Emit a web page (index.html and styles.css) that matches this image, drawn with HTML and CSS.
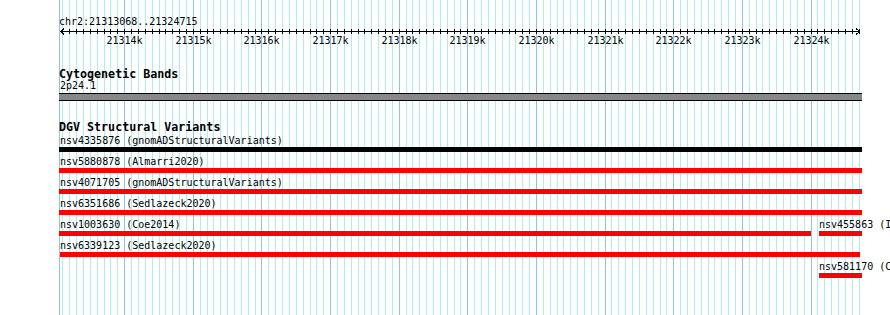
FILE: index.html
```html
<!DOCTYPE html>
<html lang="en">
<head>
    <meta charset="UTF-8">
    <meta name="viewport" content="width=device-width, initial-scale=1.0">
    <title>chr2:21313068..21324715</title>
    <link rel="stylesheet" href="styles.css">
</head>
<body>

<div class="browser">
    <div class="gridlines" id="gridlines"></div>

    <div class="location">chr2:21313068..21324715</div>
    <svg class="ruler" id="ruler" width="890" height="20"></svg>

    <div class="track">
        <div class="track-label">Cytogenetic Bands</div>
        <div class="band-name">2p24.1</div>
        <div class="band"></div>
    </div>

    <div class="track track-dgv">
        <div class="track-label">DGV Structural Variants</div>
        <div id="variants"></div>
    </div>
</div>

<script>
    const viewStart = 21313068;
    const viewEnd = 21324715;
    const trackLeft = 59;
    const trackRight = 862;

    // px position of a base on screen
    function bpToPx(bp) {
        return 124.7 + (bp - 21314000) * 0.06863;
    }

    function drawGrid() {
        const grid = document.getElementById('gridlines');

        const edge = document.createElement('div');
        edge.className = 'gridline gridline-major';
        edge.style.left = trackLeft + 'px';
        grid.appendChild(edge);

        for (let bp = Math.ceil(viewStart / 100) * 100; bp <= viewEnd; bp += 100) {
            const line = document.createElement('div');
            line.className = bp % 1000 === 0 ? 'gridline gridline-major' : 'gridline gridline-minor';
            line.style.left = Math.floor(bpToPx(bp)) + 'px';
            grid.appendChild(line);
        }
    }

    function drawRuler() {
        const ruler = document.getElementById('ruler');
        let svg = '<line class="ruler-line" x1="60" y1="3.5" x2="860" y2="3.5"/>';
        svg += '<path class="ruler-line" d="M64,0.5 L60.5,3.5 L64,6.5"/>';
        svg += '<path class="ruler-line" d="M856,0.5 L859.5,3.5 L856,6.5"/>';

        for (let bp = Math.ceil(viewStart / 100) * 100; bp <= viewEnd; bp += 100) {
            const x = Math.floor(bpToPx(bp)) + 0.5;
            svg += `<line class="ruler-line" x1="${x}" y1="1" x2="${x}" y2="6"/>`;
            if (bp % 1000 === 0) {
                svg += `<text class="tick-label" x="${x}" y="16">${bp / 1000}k</text>`;
            }
        }
        ruler.innerHTML = svg;
    }

    const variants = [
        [{ name: 'nsv4335876', source: 'gnomADStructuralVariants', start: 21290112, end: 21338410, color: '#000' }],
        [{ name: 'nsv5880878', source: 'Almarri2020', start: 21300541, end: 21331220, color: '#f00' }],
        [{ name: 'nsv4071705', source: 'gnomADStructuralVariants', start: 21296830, end: 21329975, color: '#f00' }],
        [{ name: 'nsv6351686', source: 'Sedlazeck2020', start: 21305114, end: 21327601, color: '#f00' }],
        [
            { name: 'nsv1003630', source: 'Coe2014', start: 21260731, end: 21324000, color: '#f00' },
            { name: 'nsv455863', source: 'Itsara2009', start: 21324120, end: 21365472, color: '#f00' }
        ],
        [{ name: 'nsv6339123', source: 'Sedlazeck2020', start: 21313058, end: 21324725, color: '#f00' }],
        [{ name: 'nsv581170', source: 'Cooper2011', start: 21324120, end: 21412830, color: '#f00' }]
    ];

    function drawVariants() {
        const container = document.getElementById('variants');

        variants.forEach(row => {
            const rowDiv = document.createElement('div');
            rowDiv.className = 'feature-row';

            row.forEach(variant => {
                const left = Math.max(Math.floor(bpToPx(variant.start)), trackLeft);
                const right = Math.min(Math.floor(bpToPx(variant.end)), trackRight);

                const feature = document.createElement('div');
                feature.className = 'feature';
                feature.style.left = left + 'px';

                const label = document.createElement('div');
                label.className = left === trackLeft ? 'feature-label clipped' : 'feature-label';
                label.textContent = `${variant.name} (${variant.source})`;
                feature.appendChild(label);

                const bar = document.createElement('div');
                bar.className = 'feature-bar';
                bar.style.width = (right - left) + 'px';
                bar.style.backgroundColor = variant.color;
                feature.appendChild(bar);

                rowDiv.appendChild(feature);
            });

            container.appendChild(rowDiv);
        });
    }

    drawGrid();
    drawRuler();
    drawVariants();
</script>

</body>
</html>
```

FILE: styles.css
```css
body {
    margin: 0;
    overflow: hidden;
    background-color: #fff;
    color: #000;
    font-family: "DejaVu Sans Mono", monospace;
    font-size: 10px;
}

.browser {
    position: relative;
    width: 890px;
    height: 315px;
    overflow: hidden;
}

.gridlines {
    position: absolute;
    top: 0;
    left: 0;
    right: 0;
    bottom: 0;
}

.gridline {
    position: absolute;
    top: 0;
    bottom: 0;
    width: 1px;
}

.gridline-minor {
    background-color: #b0ecf0;
}

.gridline-major {
    background-color: #8cc4ec;
}

.location {
    position: relative;
    padding: 15px 0 0 59px;
    line-height: 13px;
    height: 13px;
    white-space: nowrap;
}

.ruler {
    position: relative;
    display: block;
    shape-rendering: crispEdges;
}

.ruler-line {
    stroke: #000;
    stroke-width: 1;
    fill: none;
}

.tick-label {
    font-family: "DejaVu Sans Mono", monospace;
    font-size: 10px;
    text-anchor: middle;
    fill: #000;
}

.track {
    position: relative;
    margin-top: 20px;
}

.track-label {
    padding-left: 59px;
    font-size: 11.67px;
    font-weight: bold;
    line-height: 13px;
    white-space: nowrap;
}

.track-dgv .track-label {
    margin-bottom: 1px;
}

.band-name {
    padding-left: 60px;
    line-height: 10px;
}

.band {
    margin: 2px 0 0 59px;
    width: 803px;
    height: 6px;
    background-color: #888;
    border-top: 1px solid #000;
    border-bottom: 1px solid #000;
}

.feature-row {
    position: relative;
    height: 21px;
}

.feature {
    position: absolute;
    top: 0;
}

.feature-label {
    line-height: 11px;
    white-space: nowrap;
}

.feature-label.clipped {
    padding-left: 1px;
}

.feature-bar {
    margin-top: 1px;
    height: 5px;
}
```
